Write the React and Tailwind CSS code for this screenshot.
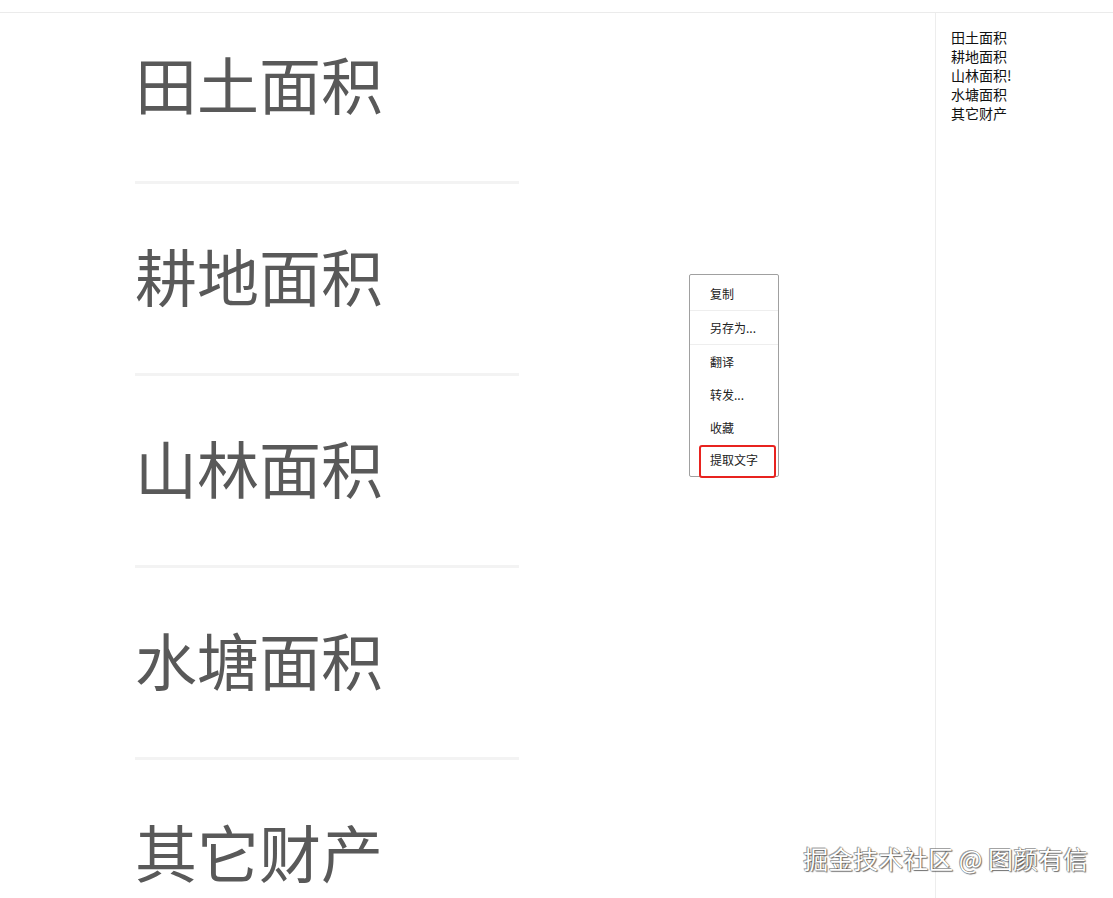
import React from "react";

const rows = ["田土面积", "耕地面积", "山林面积", "水塘面积", "其它财产"];
const side = ["田土面积", "耕地面积", "山林面积!", "水塘面积", "其它财产"];
const menu = [
  { t: "复制", h: "h-[34px]", sep: true },
  { t: "另存为...", h: "h-[34px]", sep: true },
  { t: "翻译", h: "h-[33px]" },
  { t: "转发...", h: "h-[33px]" },
  { t: "收藏", h: "h-[33px]" },
  { t: "提取文字", h: "h-[32px]" },
];

export default function App() {
  return (
    <div
      className="relative flex flex-col w-[1113px] h-[898px] overflow-hidden bg-white"
      style={{ fontFamily: '"Noto Sans CJK SC", "Noto Sans", sans-serif' }}
    >
      <div className="h-[13px] shrink-0 border-b border-[#ebebeb]" />
      <div className="flex flex-1">
        <div className="flex w-[935px] flex-col gap-[60px] pl-[135px] pt-[39px]">
          {rows.map((r, i) => (
            <div key={r} className="flex flex-col gap-[67px]">
              <div className="h-[62px] text-[62px] leading-[62px] text-[#595959] whitespace-nowrap">
                {r}
              </div>
              {i < rows.length - 1 && (
                <div className="h-[3px] w-[384px] bg-[#f3f3f3]" />
              )}
            </div>
          ))}
        </div>
        <div className="flex flex-1 flex-col border-l border-[#ededed] pl-[15px] pt-[15px]">
          {side.map((s) => (
            <div key={s} className="text-[14px] leading-[19px] text-[#111]">
              {s}
            </div>
          ))}
        </div>
      </div>

      <div className="absolute left-[689px] top-[274px] flex w-[90px] flex-col rounded-[2px] border border-[#a0a0a0] bg-white pt-[2px]">
        {menu.map((m) => (
          <div
            key={m.t}
            className={`${m.h} flex shrink-0 items-center pl-[20px] text-[12px] text-[#222] ${m.sep ? "border-b border-[#eeeeee]" : ""}`}
          >
            {m.t}
          </div>
        ))}
      </div>
      <div className="absolute left-[699px] top-[445px] w-[77px] h-[33px] rounded-[3px] border-2 border-[#e8231f]" />

      <div
        className="absolute right-[25px] top-[842px] text-[25px] leading-[32px] text-white whitespace-nowrap"
        style={{
          textShadow:
            "0 0 1px #444, 1px 1px 1px rgba(0,0,0,0.55), -1px -1px 0 rgba(120,120,120,0.6)",
        }}
      >
        掘金技术社区 @ 图颜有信
      </div>
    </div>
  );
}
